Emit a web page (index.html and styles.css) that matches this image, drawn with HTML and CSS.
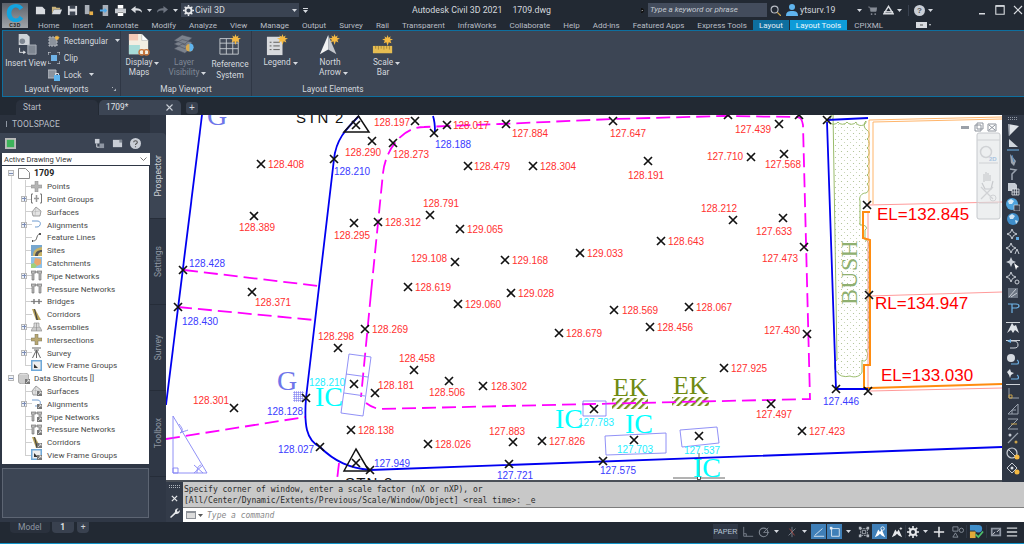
FILE: index.html
```html
<!DOCTYPE html>
<html lang="en">
<head>
<meta charset="utf-8">
<title>Autodesk Civil 3D 2021 - 1709.dwg</title>
<link rel="stylesheet" href="styles.css">
</head>
<body>
<svg class="sprite" width="0" height="0" aria-hidden="true">
  <defs>
    <symbol id="sun" viewBox="0 0 12 12"><path d="M6 0l1 3 2.500-1.500L8.500 4 12 5l-3 1.200 1.200 3L7.300 8 6 12 4.700 8 1.800 9.200 3 6.200 0 5l3.500-1-1-2.500L5 3z" fill="#f5b942"/></symbol>
    <symbol id="caret" viewBox="0 0 5 3"><path d="M0 0h5L2.500 3z" fill="#d5d9df"/></symbol>
    <symbol id="t-points" viewBox="0 0 11 11"><path d="M4 0h3v4h4v3H7v4H4V7H0V4h4z" fill="#b5b5b5" stroke="#888" stroke-width=".5"/></symbol>
    <symbol id="t-groups" viewBox="0 0 11 11"><path d="M2 1H.5v9H2M9 1h1.500v9H9" fill="none" stroke="#777"/><path d="M5.500 2v7M3 5.500h5" stroke="#999" stroke-width="1.500"/></symbol>
    <symbol id="t-surface" viewBox="0 0 11 11"><path d="M1 6l4-5 5 4-1 5H2z" fill="#e4e4e4" stroke="#888" stroke-width=".8"/><path d="M5 1l-1 9m-3-4l8-1" stroke="#aaa" stroke-width=".5"/></symbol>
    <symbol id="t-align" viewBox="0 0 11 11"><path d="M1 2h5c3 0 4 2 3 4-1 2-2 2-5 2" fill="none" stroke="#6e9bd0" stroke-width="1"/></symbol>
    <symbol id="t-feature" viewBox="0 0 11 11"><path d="M1 9c4 0 4-1 5-4s2-3 3-3" fill="none" stroke="#666"/><path d="M1 8h1v2H1zM8 1h2v2H8z" fill="#555"/></symbol>
    <symbol id="t-sites" viewBox="0 0 11 11"><path d="M0 0h11v11H0z" fill="#77a7cf"/><path d="M2 11c0-6 3-8 9-9v9z" fill="#c9b468"/><path d="M4 11c0-4 3-6 7-6v2c-3 0-4 2-4 4z" fill="#555"/></symbol>
    <symbol id="t-catch" viewBox="0 0 11 11"><path d="M0 0h11v11H0z" fill="#8fc1e8"/><path d="M4 1l6 1v5L6 9 3 6z" fill="#e8a76d"/><path d="M0 7l3-1 3 3-2 2H0z" fill="#9ecf7a"/></symbol>
    <symbol id="t-pipe" viewBox="0 0 11 11"><path d="M0 1h5v2H3v7H1V3H0zM6 1h5v2h-1v7H8V3H6z" fill="#bbb" stroke="#666" stroke-width=".6"/></symbol>
    <symbol id="t-bridge" viewBox="0 0 11 11"><path d="M0 5.500h11" stroke="#888" stroke-width="1.200"/><path d="M3 3v5M8 3v5" stroke="#777" stroke-width="1.400"/></symbol>
    <symbol id="t-corr" viewBox="0 0 11 11"><path d="M1 0l3 0 6 11H5z" fill="#b9a35a"/><path d="M3 0l1 0 3 11H5.500z" fill="#444"/></symbol>
    <symbol id="t-assy" viewBox="0 0 11 11"><path d="M0 10l2-4h7l2 4z" fill="#ccc" stroke="#888" stroke-width=".6"/><path d="M3 6V2h5v4M5.500 2v8" fill="#ddd" stroke="#888" stroke-width=".6"/></symbol>
    <symbol id="t-inter" viewBox="0 0 11 11"><path d="M4 0h3v4h4v3H7v4H4V7H0V4h4z" fill="#b9a873" stroke="#77705a" stroke-width=".5"/></symbol>
    <symbol id="t-survey" viewBox="0 0 11 11"><path d="M1 1h9M3 3h5M5.500 3L1.500 11M5.500 3l4 8M5.500 3v8" fill="none" stroke="#666"/></symbol>
    <symbol id="t-view" viewBox="0 0 11 11"><path d="M0 0h11v11H0z" fill="#6fa8d8"/><path d="M1.500 1.500h8v8h-8z" fill="#eee"/><path d="M3 8V4l4 4z" fill="#333"/></symbol>
    <symbol id="t-db" viewBox="0 0 11 11"><ellipse cx="5.500" cy="2" rx="5" ry="2" fill="#ddd" stroke="#888" stroke-width=".6"/><path d="M.5 2v7c0 1 2 2 5 2s5-1 5-2V2" fill="#ccc" stroke="#888" stroke-width=".6"/></symbol>
    <symbol id="link" viewBox="0 0 5 5"><path d="M0 0h5v5H0z" fill="#777"/><path d="M1 4l3-3M2 1h2v2" stroke="#fff" stroke-width=".6" fill="none"/></symbol>
    <symbol id="r-flag" viewBox="0 0 14 14"><path d="M2 1l11 2-7 7-3 3z" fill="#dfe3e8"/><path d="M3 1v12" stroke="#6e7683"/></symbol>
    <symbol id="r-flag2" viewBox="0 0 14 14"><path d="M3 1l9 8H3z" fill="#cfd5dc"/><path d="M1 12h12" stroke="#6fb3e8"/></symbol>
    <symbol id="r-blade" viewBox="0 0 14 14"><path d="M4 1l6 7-2 5-3-3z" fill="#9aa3af"/><path d="M6 2l2 7" stroke="#4f86b9"/></symbol>
    <symbol id="r-small" viewBox="0 0 14 14"><path d="M4 2l6 1-4 4v6" fill="none" stroke="#9aa3af" stroke-width="1.500"/></symbol>
    <symbol id="r-table" viewBox="0 0 14 14"><path d="M2 1h7l2 2v6H2z" fill="#c6ccd4"/><path d="M6 7h7v6H6zM8.300 7v6M10.600 7v6M6 10h7" fill="#39414f" stroke="#dfe3e8" stroke-width=".8"/></symbol>
    <symbol id="r-globe" viewBox="0 0 14 14"><circle cx="6" cy="7" r="6" fill="#4fa3dc"/><path d="M2 4l3-2 3 2-2 3H3zM8 8l3 1-2 3z" fill="#d9eaf6"/><path d="M8 8h6v6H8z" fill="#39414f" stroke="#dfe3e8" stroke-width=".6"/></symbol>
    <symbol id="r-globe2" viewBox="0 0 14 14"><circle cx="7" cy="7" r="6" fill="#3f8ecb"/><path d="M3 4l3-2 3 2-2 3H4zM9 8l3 1-2 3z" fill="#cfe4f3"/></symbol>
    <symbol id="r-snap" viewBox="0 0 14 14"><path d="M6 2l1.500 3.500L11 7 7.500 8.500 6 12 4.500 8.500 1 7l3.500-1.500z" fill="none" stroke="#c9ced6"/><path d="M10 10h3v3h-3z" fill="#5fa8e0"/></symbol>
    <symbol id="r-a" viewBox="0 0 14 14"><path d="M5 2l1.500 3.500L10 7 6.500 8.500 5 12 3.500 8.500 0 7l3.500-1.500z" fill="none" stroke="#c9ced6"/><path d="M9 13l2-5 2 5" stroke="#c9ced6" fill="none"/></symbol>
    <symbol id="r-cur" viewBox="0 0 14 14"><path d="M5 1l1.500 3.500L10 6 6.500 7.500 5 11 3.500 7.500 0 6l3.500-1.500z" fill="#c9ced6"/><path d="M8 7l5 4-2 .5L10 14z" fill="#fff"/></symbol>
    <symbol id="r-o" viewBox="0 0 14 14"><path d="M5 1l1.500 3.500L10 6 6.500 7.500 5 11 3.500 7.500 0 6l3.500-1.500z" fill="none" stroke="#c9ced6"/><circle cx="11" cy="11" r="2" fill="none" stroke="#c9ced6"/></symbol>
    <symbol id="r-plot" viewBox="0 0 14 14"><path d="M2 2h10v10H2z" fill="#6c7583"/><path d="M3 11l7-8M5 11l6-4" stroke="#c9ced6"/></symbol>
    <symbol id="r-t" viewBox="0 0 14 14"><path d="M2 3h8c2 0 3 1 3 2s-1 2-3 2H6M6 3v9" fill="none" stroke="#6fb3e8" stroke-width="1.200"/></symbol>
    <symbol id="r-ar" viewBox="0 0 14 14"><path d="M1 12l5-10 2 3 2-1 3 8-4-3-2 3-2-3z" fill="#dfe3e8"/></symbol>
    <symbol id="r-undo" viewBox="0 0 14 14"><path d="M2 3h6c3 0 4 2 4 4s-1 3-4 3H4" fill="none" stroke="#cfd5dc"/><path d="M5 1v4L1 3z" fill="#6fb3e8"/></symbol>
    <symbol id="r-ball" viewBox="0 0 14 14"><circle cx="5" cy="5" r="4" fill="#d5dae0"/><path d="M5 11h6c2 0 2-3 0-4" fill="none" stroke="#6fb3e8" stroke-width="1.200"/></symbol>
    <symbol id="r-spk" viewBox="0 0 14 14"><path d="M1 4l3-3 1 3 3 1-3 2-1 3-1-3z" fill="#dfe3e8"/><path d="M5 11h6c2 0 2-3 0-4" fill="none" stroke="#6fb3e8" stroke-width="1.200"/></symbol>
    <symbol id="r-ucs" viewBox="0 0 14 14"><path d="M3 1v10h10" fill="none" stroke="#9aa3af"/><path d="M3 8h3v3H3z" fill="none" stroke="#c9a24a"/></symbol>
    <symbol id="r-ucs2" viewBox="0 0 14 14"><path d="M2 12h10V2L2 12M6 12V8h4" fill="none" stroke="#9aa3af"/></symbol>
    <symbol id="r-ucs3" viewBox="0 0 14 14"><path d="M2 2h10L2 12h10" fill="none" stroke="#9aa3af"/><path d="M5 7h6" stroke="#c9a24a"/></symbol>
    <symbol id="r-ln" viewBox="0 0 14 14"><path d="M2 12L12 2" stroke="#9aa3af" stroke-width="1.200"/><circle cx="4" cy="4" r="1.500" fill="#c9ced6"/><circle cx="10" cy="11" r="1.500" fill="#c9a24a"/></symbol>
    <symbol id="r-cir" viewBox="0 0 14 14"><circle cx="6" cy="7" r="5" fill="none" stroke="#c9ced6" stroke-width="1.200"/><path d="M2 3l8 8" stroke="#c9ced6"/><circle cx="11" cy="11" r="2.500" fill="#f5b942"/></symbol>
    <symbol id="r-dia" viewBox="0 0 14 14"><path d="M6 2l5 5-5 5-5-5z" fill="none" stroke="#c9ced6"/><circle cx="11" cy="11" r="2.500" fill="#f5b942"/><circle cx="6" cy="7" r="1.500" fill="#dfe3e8"/></symbol>
  </defs>
</svg>

<div class="app">
  <header class="titlebar">
    <div class="appbtn">
      <svg class="applogo" viewBox="0 0 26 22"><path d="M22 5C20 2 17 1 14 1 8 1 4 5 4 11s4 10 10 10c3 0 6-1 8-4l-4-3c-1 2-2 3-4 3-3 0-5-3-5-6s2-6 5-6c2 0 3 1 4 3z" fill="#12a4e0"/></svg>
      <span class="applabel">C3D</span>
    </div>
    <div class="qat">
      <svg class="q" viewBox="0 0 12 12"><path d="M1 2h7l3 3v5H1z" fill="#d8dbe0"/></svg>
      <svg class="q" viewBox="0 0 12 12"><path d="M1 2h4l1 1h4v2H3l-2 5z" fill="#c9b27a"/><path d="M3 5h9l-2 5H1z" fill="#d8dbe0"/></svg>
      <svg class="q" viewBox="0 0 12 12"><path d="M1 1h10v10H1z" fill="#d8dbe0"/><path d="M3 1h6v3H3zM3 7h6v4H3z" fill="#3d4552"/></svg>
      <svg class="q" viewBox="0 0 12 12"><path d="M2 0h5v10H2z" fill="#aab0b9"/><path d="M7 7h4v4H7z" fill="#e8b04a"/></svg>
      <svg class="q" viewBox="0 0 12 12"><path d="M4 0h6v12H4z" fill="#aab0b9"/><path d="M1 5h5V3l3 3-3 3V7H1z" fill="#4fa8e8"/></svg>
      <svg class="q" viewBox="0 0 12 12"><path d="M3 0h6v4H3z" fill="#fff"/><path d="M0 4h12v5H0z" fill="#c5c9cf"/><path d="M3 7h6v5H3z" fill="#fff"/><path d="M3 8h6" stroke="#777"/></svg>
      <svg class="q" viewBox="0 0 12 12"><path d="M0 5l5-4v2.500c4 0 7 1 7 5-1-2-3-2.500-7-2.500V9z" fill="#d8dbe0"/></svg>
      <svg class="c" viewBox="0 0 5 3"><use href="#caret"/></svg>
      <svg class="q dim" viewBox="0 0 12 12"><path d="M12 5L7 1v2.500c-4 0-7 1-7 5 1-2 3-2.500 7-2.500V9z" fill="#6d7480"/></svg>
      <svg class="c" viewBox="0 0 5 3"><use href="#caret"/></svg>
    </div>
    <div class="workspace">
      <svg class="gear" viewBox="0 0 12 12"><circle cx="6" cy="6" r="3.300" fill="none" stroke="#e6e8eb" stroke-width="2"/><path d="M6 0v2M6 10v2M0 6h2M10 6h2M1.800 1.800l1.400 1.400M8.800 8.800l1.400 1.400M1.800 10.200l1.400-1.400M8.800 3.200l1.400-1.400" stroke="#e6e8eb" stroke-width="1.600"/></svg>
      <span>Civil 3D</span>
      <svg class="c push" viewBox="0 0 5 3"><use href="#caret"/></svg>
    </div>
    <svg class="c drop" viewBox="0 0 5 5"><path d="M0 0h5v1H0zM0 2h5L2.500 5z" fill="#d5d9df"/></svg>
    <div class="doc-title"><span>Autodesk Civil 3D 2021</span><span>1709.dwg</span></div>
    <svg class="tri" viewBox="0 0 3 5"><path d="M0 0l3 2.500L0 5z" fill="#d5d9df"/></svg>
    <div class="search">Type a keyword or phrase</div>
    <svg class="glass" viewBox="0 0 12 12"><circle cx="5" cy="5" r="3.800" fill="none" stroke="#b8bdc5" stroke-width="1.200"/><path d="M8 8l4 4" stroke="#c9a24a" stroke-width="1.400"/></svg>
    <svg class="user" viewBox="0 0 12 12"><circle cx="6" cy="3" r="3" fill="#5fb4ee"/><path d="M0 12c0-4 2-5 6-5s6 1 6 5z" fill="#5fb4ee"/></svg>
    <span class="username">ytsurv.19</span>
    <svg class="c ucaret" viewBox="0 0 5 3"><use href="#caret"/></svg>
    <svg class="cart" viewBox="0 0 10 10"><path d="M0 1h2l1 5h6l1-4H2.500" fill="#868c96" stroke="#868c96" stroke-width=".6"/><circle cx="4" cy="9" r="1" fill="#868c96"/><circle cx="8" cy="9" r="1" fill="#868c96"/></svg>
    <svg class="a360" viewBox="0 0 12 10"><path d="M6 1L1 9h10z" fill="none" stroke="#d8dbe0" stroke-width="1.600"/><path d="M1 7h10" stroke="#d8dbe0" stroke-width="1.600"/></svg>
    <svg class="c" viewBox="0 0 5 3"><use href="#caret"/></svg>
    <i class="tsep"></i>
    <span class="help">?</span>
    <svg class="c" viewBox="0 0 5 3"><use href="#caret"/></svg>
    <div class="winbtns">
      <svg class="wb" viewBox="0 0 10 10"><path d="M2 8h6v1.500H2z" fill="#d8dbe0"/></svg>
      <svg class="wb" viewBox="0 0 10 10"><path d="M.8.800h8.400v8.400H.8z" fill="none" stroke="#d8dbe0" stroke-width="1.100"/><path d="M.8 1h8.400" stroke="#d8dbe0" stroke-width="1.600"/></svg>
      <svg class="wb" viewBox="0 0 10 10"><path d="M1 1l8 8M9 1l-8 8" stroke="#d8dbe0" stroke-width="1.200"/></svg>
    </div>
  </header>

  <nav class="tabs">
    <span>Home</span><span>Insert</span><span>Annotate</span><span>Modify</span><span>Analyze</span><span>View</span><span>Manage</span><span>Output</span><span>Survey</span><span>Rail</span><span>Transparent</span><span>InfraWorks</span><span>Collaborate</span><span>Help</span><span>Add-ins</span><span>Featured Apps</span><span>Express Tools</span>
    <span class="tab-on">Layout</span><span class="tab-ctx">Layout Tools</span><span>CPIXML</span>
    <svg class="minbtn" viewBox="0 0 15 6"><path d="M0 0h11v6H0z" fill="#d8dbe0"/><path d="M4 2.500h3v1H4z" fill="#555"/><path d="M13 2h2l-1 2z" fill="#d8dbe0"/></svg>
  </nav>

  <section class="ribbon">
    <div class="panel p1">
      <div class="pbody">
        <div class="bigbtn w-insert">
          <svg class="ic" viewBox="0 0 24 24"><path d="M4 0h9l3 3v9H4z" fill="#cfd3d8"/><circle cx="8" cy="8" r="3" fill="#7f8792"/><path d="M5 15v5h5" fill="none" stroke="#e6e8eb"/><path d="M9 18l3 2-3 2z" fill="#e6e8eb"/><path d="M14 12h9v10h-9z" fill="#7f8792" stroke="#aeb4bc"/></svg>
          <span>Insert View</span>
        </div>
        <div class="vlist">
          <div class="smbtn"><svg class="sm" viewBox="0 0 12 12"><path d="M1 2h8v9H1z" fill="#8b929c" stroke="#b5bac1" stroke-dasharray="2 1"/><use href="#sun" x="6" y="0" width="6" height="6"/></svg><span>Rectangular</span><svg class="c cm" viewBox="0 0 5 3"><use href="#caret"/></svg></div>
          <div class="smbtn"><svg class="sm" viewBox="0 0 12 12"><path d="M0 3V0h3M9 0h3v3M12 9v3H9M3 12H0V9" fill="none" stroke="#dfe3e8"/><path d="M3 3h6v6H3z" fill="#6fb3e8"/></svg><span>Clip</span></div>
          <div class="smbtn"><svg class="sm" viewBox="0 0 12 12"><path d="M0 1h8v8H0z" fill="#8b929c" stroke="#b5bac1"/><path d="M6 6h6v6H6z" fill="#5fb4ee"/><path d="M7.500 6V4.500h3V6" fill="none" stroke="#dfe3e8"/></svg><span>Lock</span><svg class="c cm" viewBox="0 0 5 3"><use href="#caret"/></svg></div>
        </div>
      </div>
      <div class="plabel">Layout Viewports<svg class="launch" viewBox="0 0 4 4"><path d="M0 0h1v1H0zM4 4H1.500L4 1.500z" fill="#aeb4bc"/></svg></div>
    </div>
    <div class="panel p2">
      <div class="pbody">
        <div class="bigbtn w-maps">
          <svg class="ic" viewBox="0 0 24 24"><path d="M1 0h14l7 7v15H1z" fill="#f3eee2"/><path d="M1 0h10v7H1z" fill="#f3c9b5"/><path d="M1 12h12v10H1z" fill="#a8dcd8"/><path d="M15 0v7h7" fill="#fff" stroke="#999" stroke-width=".5"/><circle cx="15" cy="20" r="3" fill="none" stroke="#c8743a" stroke-width="1.500"/><circle cx="20" cy="20" r="3" fill="none" stroke="#c8743a" stroke-width="1.500"/></svg>
          <span>Display<svg class="c cl" viewBox="0 0 5 3"><use href="#caret"/></svg></span><span>Maps</span>
        </div>
        <div class="bigbtn w-layer dimtext">
          <svg class="ic" viewBox="0 0 24 24"><path d="M1 7l9-6 11 3-8 7zM1 11l9-5 11 3-8 7zM1 16l9-5 11 3-8 7z" fill="#7b828d" stroke="#454c59" stroke-width=".6"/><circle cx="18" cy="15" r="4" fill="#d9a94f"/><path d="M18 10a4 4 0 0 1 0 9z" fill="#5fb4ee"/></svg>
          <span>Layer</span><span>Visibility<svg class="c cl" viewBox="0 0 5 3"><use href="#caret"/></svg></span>
        </div>
        <div class="bigbtn w-ref">
          <svg class="ic" viewBox="0 0 24 24"><path d="M1 5h20v17H1zM1 10h20M1 16h20M8 5v17M15 5v17" fill="#434b59" stroke="#c5c9cf"/><use href="#sun" x="12" y="0" width="12" height="12"/></svg>
          <span>Reference</span><span>System</span>
        </div>
      </div>
      <div class="plabel">Map Viewport</div>
    </div>
    <div class="panel p3">
      <div class="pbody">
        <div class="bigbtn w-legend">
          <svg class="ic" viewBox="0 0 24 24"><path d="M1 3h17v20H1z" fill="#d8dadd"/><path d="M4 9h2M8 9h7M4 13h2M8 13h7M4 17h2M8 17h7" stroke="#555"/><use href="#sun" x="12" y="0" width="12" height="12"/></svg>
          <span>Legend<svg class="c cl" viewBox="0 0 5 3"><use href="#caret"/></svg></span>
        </div>
        <div class="bigbtn w-north">
          <svg class="ic" viewBox="0 0 24 24"><path d="M10 1L1 22l9-5z" fill="#f2f3f4"/><path d="M10 1l9 21-9-5z" fill="#c2c6cc"/><use href="#sun" x="11" y="0" width="12" height="12"/></svg>
          <span>North</span><span>Arrow<svg class="c cl" viewBox="0 0 5 3"><use href="#caret"/></svg></span>
        </div>
        <div class="bigbtn w-scale">
          <svg class="ic" viewBox="0 0 24 24"><path d="M1 13h21v8H1z" fill="#e6bd52"/><path d="M4 13v3M7 13v4M10 13v3M13 13v4M16 13v3M19 13v4" stroke="#8a6f2a" stroke-width=".7"/><use href="#sun" x="11" y="1" width="12" height="12"/></svg>
          <span>Scale<svg class="c cl" viewBox="0 0 5 3"><use href="#caret"/></svg></span><span>Bar</span>
        </div>
      </div>
      <div class="plabel">Layout Elements</div>
    </div>
  </section>

  <div class="doctabs">
    <div class="doctab">Start</div>
    <div class="doctab active"><span>1709*</span><svg class="dx" viewBox="0 0 7 7"><path d="M.5.500l6 6M6.500.500l-6 6" stroke="#c9ced6" stroke-width="1.100"/></svg></div>
    <div class="docplus">+</div>
  </div>

  <div class="workarea">
    <aside class="left">
      <div class="palette">
        <div class="phead"><i class="grip"></i>TOOLSPACE</div>
        <div class="ptools">
          <svg class="pt-first" viewBox="0 0 12 12"><path d="M0 0h12v12H0z" fill="#bbb"/><path d="M2 2h8v8H2z" fill="#3db35a"/></svg>
          <div class="pt-right">
            <svg viewBox="0 0 12 12"><path d="M1 1h5v5H1z" fill="#c9ced6"/><path d="M6 6h5v5H6z" fill="#8f97a3"/><path d="M3 6v4h3" fill="none" stroke="#dfe3e8"/></svg>
            <svg viewBox="0 0 12 12"><path d="M1 2h10v8H1z" fill="#c9ced6"/><path d="M8 2h3v3H8z" fill="#7f8792"/></svg>
            <svg viewBox="0 0 12 12"><circle cx="6" cy="6" r="6" fill="#c9ced6"/><path d="M4 4.500C4 2.500 8 2.500 8 4.500 8 6 6 6 6 7.500M6 9v1" fill="none" stroke="#555" stroke-width="1.200"/></svg>
          </div>
        </div>
        <div class="combo"><span>Active Drawing View</span><svg viewBox="0 0 7 4"><path d="M.5.500L3.500 3.500 6.500.500" fill="none" stroke="#777"/></svg></div>
        <div class="tree">
          <div class="row root g1"><i class="box minus"></i><svg class="tic wide" viewBox="0 0 12 11"><path d="M.5.500h7l4 4v6H.5z" fill="#fff" stroke="#888"/></svg><b>1709</b></div>
          <div class="row l1 g1"><i class="nobox"></i><svg class="tic"><use href="#t-points"/></svg><span>Points</span></div>
          <div class="row l1 g1"><i class="box plus"></i><svg class="tic"><use href="#t-groups"/></svg><span>Point Groups</span></div>
          <div class="row l1 g1"><i class="nobox"></i><svg class="tic"><use href="#t-surface"/></svg><span>Surfaces</span></div>
          <div class="row l1 g1"><i class="box plus"></i><svg class="tic"><use href="#t-align"/></svg><span>Alignments</span></div>
          <div class="row l1 g1"><i class="nobox"></i><svg class="tic"><use href="#t-feature"/></svg><span>Feature Lines</span></div>
          <div class="row l1 g1"><i class="nobox"></i><svg class="tic"><use href="#t-sites"/></svg><span>Sites</span></div>
          <div class="row l1 g1"><i class="nobox"></i><svg class="tic"><use href="#t-catch"/></svg><span>Catchments</span></div>
          <div class="row l1 g1"><i class="box plus"></i><svg class="tic"><use href="#t-pipe"/></svg><span>Pipe Networks</span></div>
          <div class="row l1 g1"><i class="nobox"></i><svg class="tic"><use href="#t-pipe"/></svg><span>Pressure Networks</span></div>
          <div class="row l1 g1"><i class="nobox"></i><svg class="tic"><use href="#t-bridge"/></svg><span>Bridges</span></div>
          <div class="row l1 g1"><i class="nobox"></i><svg class="tic"><use href="#t-corr"/></svg><span>Corridors</span></div>
          <div class="row l1 g1"><i class="box plus"></i><svg class="tic"><use href="#t-assy"/></svg><span>Assemblies</span></div>
          <div class="row l1 g1"><i class="nobox"></i><svg class="tic"><use href="#t-inter"/></svg><span>Intersections</span></div>
          <div class="row l1 g1"><i class="box plus"></i><svg class="tic"><use href="#t-survey"/></svg><span>Survey</span></div>
          <div class="row l1 g1 last"><i class="nobox"></i><svg class="tic"><use href="#t-view"/></svg><span>View Frame Groups</span></div>
          <div class="row root"><i class="box minus"></i><svg class="tic wide" viewBox="0 0 12 11"><use href="#t-db" width="11" height="11"/><use href="#link" x="7" y="6" width="5" height="5"/></svg><span>Data Shortcuts []</span></div>
          <div class="row l1"><i class="nobox"></i><svg class="tic" viewBox="0 0 11 11"><use href="#t-surface" width="11" height="11"/><use href="#link" x="6" y="6" width="5" height="5"/></svg><span>Surfaces</span></div>
          <div class="row l1"><i class="box plus"></i><svg class="tic" viewBox="0 0 11 11"><use href="#t-align" width="11" height="11"/><use href="#link" x="6" y="6" width="5" height="5"/></svg><span>Alignments</span></div>
          <div class="row l1"><i class="nobox"></i><svg class="tic" viewBox="0 0 11 11"><use href="#t-pipe" width="11" height="11"/><use href="#link" x="6" y="6" width="5" height="5"/></svg><span>Pipe Networks</span></div>
          <div class="row l1"><i class="nobox"></i><svg class="tic" viewBox="0 0 11 11"><use href="#t-pipe" width="11" height="11"/><use href="#link" x="6" y="6" width="5" height="5"/></svg><span>Pressure Networks</span></div>
          <div class="row l1"><i class="nobox"></i><svg class="tic" viewBox="0 0 11 11"><use href="#t-corr" width="11" height="11"/><use href="#link" x="6" y="6" width="5" height="5"/></svg><span>Corridors</span></div>
          <div class="row l1 last"><i class="nobox"></i><svg class="tic" viewBox="0 0 11 11"><use href="#t-view" width="11" height="11"/><use href="#link" x="6" y="6" width="5" height="5"/></svg><span>View Frame Groups</span></div>
        </div>
        <div class="detail"></div>
      </div>
      <div class="ptabs">
        <div class="ptab on"><span>Prospector</span></div>
        <div class="ptab"><span>Settings</span></div>
        <div class="ptab"><span>Survey</span></div>
        <div class="ptab"><span>Toolbox</span></div>
      </div>
    </aside>

    <div class="centre">
      <div class="drawing">
        <main class="canvas">
          <svg class="map" viewBox="166 115 836 365" width="836" height="365">
            <defs>
              <g id="x"><path d="M-4-4L4 4M4-4L-4 4"/></g>
              <pattern id="dots" width="6" height="6" patternUnits="userSpaceOnUse"><circle cx="1.500" cy="1.500" r=".6" fill="#a8bd8a"/><circle cx="4.500" cy="4.500" r=".6" fill="#c2d1ad"/></pattern>
              <pattern id="hatch" width="5" height="5" patternUnits="userSpaceOnUse" patternTransform="rotate(-45)"><rect width="5" height="5" fill="#fff"/><rect width="5" height="2.200" fill="#7a8f1e"/></pattern>
              <pattern id="grid" width="2" height="2" patternUnits="userSpaceOnUse"><rect width="2" height="2" fill="#fff"/><path d="M0 0h2M0 0v2" stroke="#6c6cf0" stroke-width="1"/></pattern>
            </defs>

            <path class="bush" d="M829 122a5 4 0 0 0 9 0a5 4 0 0 0 9 0a5 4 0 0 0 9 0a5 4 0 0 0 10-1a4 5 0 0 0 1 9a4 5 0 0 1 0 9a4 5 0 0 1 0 9a4 5 0 0 1 0 9a4 5 0 0 1 0 9a4 5 0 0 1 0 9a4 5 0 0 1 0 9a4 5 0 0 1-1 9a6 6 0 0 0-6 8v24a5 3 0 0 1 5 5v10a3 5 0 0 1 1 10a3 5 0 0 1 0 10a3 5 0 0 1 0 10a3 5 0 0 1 0 10a3 5 0 0 1 0 10a3 5 0 0 1 0 10a3 5 0 0 1 0 10a3 5 0 0 1 0 10a3 5 0 0 1 0 10a3 5 0 0 1 0 10a3 5 0 0 1 0 10a3 5 0 0 1-4 10v12a8 6 0 0 1-12 4a8 4 0 0 1-12-4a2 4 0 0 1-1-12l-4-248z"/>
            <text class="bushtext" transform="translate(857 305) rotate(-90)">BUSH</text>

            <path class="thinor" d="M869 205V120L1002 117M873 204V122L1002 119"/>
            <path class="thinred" d="M868 205L1002 202M868 212V390M870 296L1002 292M870 391L1002 388"/>
            <path class="orange" d="M870 212H863V238L870 240V365H864V388H870L1002 384"/>

            <rect x="612" y="398" width="36" height="11" fill="url(#hatch)"/>
            <rect x="672" y="397" width="37" height="9" fill="url(#hatch)"/>

            <path class="blue" d="M202 115L166 405"/>
            <path class="blue" d="M359 116C345 130 336 140 334 159L306 398C304 425 306 440 320 447C335 462 350 468 370 470L1002 447"/>
            <path class="blue" d="M433 116C435 122 435 127 435 132"/>
            <path class="blue" d="M827 120L868 118M827 122L836 389H868"/>

            <path class="pink" d="M371 293L361 397"/>
            <path class="pink" d="M371 293L383 173C386 147 404 127 424 127L500 124L613 119L723 116L797 117C801 117 802 120 803 125L810 399L506 406L379 409C374 408 370 406 366 403"/>
            <path class="pink" d="M184 270L319 286"/>
            <path class="pink" d="M178 307L314 320"/>
            <path class="pink" d="M166 439L305 417"/>
            <path class="pink" d="M339 463L337 480"/>

            <text class="blk" x="296" y="123">STN 2</text>
            <text class="blk" x="345" y="488">STN 3</text>
            <path class="tri" d="M358.500 116L344 132H369zM356 449L344 471H369z"/>

            <text class="g" x="207" y="125">G</text>
            <text class="g" x="277" y="390">G</text>
            <rect x="293" y="391" width="11" height="11" fill="url(#grid)"/>

            <path class="thin" d="M349 354L371 357L363 416L341 413zM346 374L368 377M344 393L365 396"/>
            <path class="thin" d="M583 401H606V416H583zM605 436L666 433V453L606 455zM680 430L717 427L719 443L682 447z"/>
            <path class="thin" d="M173 416L207 473H173zM173 468h5v5h-5zM179 424C182 428 184 430 180 433C184 431 186 431 188 430M197 473C197 468 198 466 201 465M194 465L203 473M203 465L194 473"/>
            <path class="gray" d="M673 478H725M699 453V478"/>
            <rect x="697.500" y="476.500" width="3" height="3" fill="#fff" stroke="#333" stroke-width=".8"/>

            <text class="ek" x="613" y="396">EK</text>
            <text class="ek" x="673" y="394">EK</text>

            <text class="ic" x="315" y="406">IC</text>
            <text class="ic" x="555" y="428">IC</text>
            <text class="ic" x="625" y="433">IC</text>
            <text class="ic" x="693" y="477">IC</text>

            <g class="xs">
              <use href="#x" x="356" y="125"/><use href="#x" x="415" y="121"/><use href="#x" x="447" y="125"/><use href="#x" x="434" y="133"/><use href="#x" x="372" y="141"/><use href="#x" x="393" y="143"/><use href="#x" x="334" y="159"/><use href="#x" x="261" y="164"/><use href="#x" x="468" y="166"/><use href="#x" x="254" y="216"/><use href="#x" x="354" y="223"/><use href="#x" x="378" y="222"/><use href="#x" x="430" y="215"/><use href="#x" x="460" y="229"/><use href="#x" x="183" y="270"/><use href="#x" x="455" y="262"/><use href="#x" x="408" y="287"/><use href="#x" x="252" y="292"/><use href="#x" x="178" y="307"/><use href="#x" x="365" y="329"/><use href="#x" x="458" y="304"/><use href="#x" x="338" y="348"/><use href="#x" x="414" y="370"/><use href="#x" x="449" y="381"/><use href="#x" x="483" y="386"/><use href="#x" x="354" y="384"/><use href="#x" x="375" y="393"/><use href="#x" x="306" y="398"/><use href="#x" x="234" y="408"/><use href="#x" x="351" y="430"/><use href="#x" x="428" y="444"/><use href="#x" x="320" y="447"/><use href="#x" x="356" y="463"/><use href="#x" x="370" y="470"/>
              <use href="#x" x="614" y="310"/><use href="#x" x="689" y="307"/><use href="#x" x="559" y="333"/><use href="#x" x="650" y="327"/><use href="#x" x="807" y="334"/><use href="#x" x="724" y="368"/><use href="#x" x="771" y="404"/><use href="#x" x="513" y="442"/><use href="#x" x="542" y="441"/><use href="#x" x="509" y="464"/><use href="#x" x="603" y="461"/><use href="#x" x="802" y="431"/><use href="#x" x="836" y="389"/><use href="#x" x="594" y="409"/><use href="#x" x="634" y="440"/><use href="#x" x="699" y="436"/>
              <use href="#x" x="506" y="124"/><use href="#x" x="613" y="121"/><use href="#x" x="728" y="115"/><use href="#x" x="779" y="124"/><use href="#x" x="533" y="166"/><use href="#x" x="648" y="161"/><use href="#x" x="751" y="157"/><use href="#x" x="784" y="154"/><use href="#x" x="733" y="220"/><use href="#x" x="783" y="218"/><use href="#x" x="661" y="241"/><use href="#x" x="580" y="253"/><use href="#x" x="505" y="260"/><use href="#x" x="511" y="293"/><use href="#x" x="804" y="247"/><use href="#x" x="799" y="115"/><use href="#x" x="827" y="120"/><use href="#x" x="867" y="205"/><use href="#x" x="869" y="295"/><use href="#x" x="868" y="391"/>
            </g>

            <g class="red">
              <text x="374" y="122">128.197</text><text x="453" y="125">128.017</text><text x="345" y="152">128.290</text><text x="393" y="154">128.273</text><text x="268" y="164">128.408</text><text x="474" y="166">128.479</text><text x="239" y="227">128.389</text><text x="334" y="235">128.295</text><text x="385" y="222">128.312</text><text x="423" y="203">128.791</text><text x="467" y="229">129.065</text><text x="411" y="258">129.108</text><text x="415" y="287">128.619</text><text x="255" y="302">128.371</text><text x="372" y="329">128.269</text><text x="465" y="304">129.060</text><text x="318" y="336">128.298</text><text x="399" y="358">128.458</text><text x="429" y="392">128.506</text><text x="491" y="386">128.302</text><text x="378" y="385">128.181</text><text x="193" y="400">128.301</text><text x="358" y="430">128.138</text><text x="435" y="444">128.026</text>
              <text x="622" y="310">128.569</text><text x="696" y="307">128.067</text><text x="566" y="333">128.679</text><text x="657" y="327">128.456</text><text x="764" y="330">127.430</text><text x="731" y="368">127.925</text><text x="756" y="414">127.497</text><text x="489" y="431">127.883</text><text x="549" y="441">127.826</text><text x="809" y="431">127.423</text>
              <text x="512" y="133">127.884</text><text x="610" y="133">127.647</text><text x="735" y="129">127.439</text><text x="540" y="166">128.304</text><text x="628" y="175">128.191</text><text x="707" y="156">127.710</text><text x="765" y="164">127.568</text><text x="701" y="208">128.212</text><text x="756" y="231">127.633</text><text x="668" y="241">128.643</text><text x="587" y="253">129.033</text><text x="512" y="260">129.168</text><text x="518" y="293">129.028</text><text x="762" y="258">127.473</text>
            </g>
            <g class="bl">
              <text x="435" y="144">128.188</text><text x="334" y="171">128.210</text><text x="189" y="263">128.428</text><text x="182" y="321">128.430</text><text x="267" y="411">128.128</text><text x="278" y="449">128.027</text><text x="374" y="463">127.949</text><text x="497" y="475">127.721</text><text x="600" y="470">127.575</text><text x="823" y="401">127.446</text>
            </g>
            <g class="cy">
              <text x="309" y="382">128.210</text><text x="578" y="422">127.783</text><text x="617" y="449">127.703</text><text x="684" y="450">127.537</text>
            </g>

            <text class="big" x="877" y="220">EL=132.845</text>
            <text class="big" x="875" y="309">RL=134.947</text>
            <text class="big" x="881" y="381">EL=133.030</text>

            <g class="vpc">
              <path d="M961 126h8v3h-8z" fill="#9aa0a8"/>
              <path d="M975 125h6v6h-6zM977 123h6v6h-6z" fill="none" stroke="#8d939c"/>
              <path d="M988 124h8v7h-8zM989 125l6 5M995 125l-6 5" fill="none" stroke="#8d939c"/>
            </g>
            <g class="nav">
              <rect x="977" y="133" width="23" height="86" rx="2" fill="#dfe1e4" fill-opacity=".55" stroke="#c5c8cc"/>
              <path d="M977 140h23M979 163h19M979 203h19" stroke="#cfd1d4"/>
              <circle cx="986" cy="152" r="5.500" fill="none" stroke="#d0d2d5" stroke-width="1.500"/>
              <text class="nav2d" x="989" y="161">2D</text>
              <path d="M984 182v-8m2 7v-9m2 9v-8m2 8v-6m-8 8l3 6h6l2-8" fill="none" stroke="#c8cacd" stroke-width="1.200"/>
              <path d="M981 187l12 12M993 187l-12 12" stroke="#d0d2d5" stroke-width="1.300"/>
              <circle cx="993" cy="198" r="3" fill="none" stroke="#d0d2d5"/>
            </g>
          </svg>
        </main>
        <div class="rtool">
          <i class="rgrip"></i>
          <svg><use href="#r-flag"/></svg><svg><use href="#r-flag2"/></svg><svg><use href="#r-blade"/></svg><svg><use href="#r-small"/></svg><svg><use href="#r-table"/></svg><svg><use href="#r-globe"/></svg><svg><use href="#r-globe2"/></svg><svg><use href="#r-snap"/></svg><svg><use href="#r-a"/></svg><svg><use href="#r-cur"/></svg><svg><use href="#r-o"/></svg><svg><use href="#r-plot"/></svg><svg><use href="#r-t"/></svg>
          <i class="rsep r1"></i>
          <svg><use href="#r-ar"/></svg>
          <i class="rsep r2"></i>
          <svg><use href="#r-undo"/></svg><svg><use href="#r-ball"/></svg><svg><use href="#r-spk"/></svg>
          <i class="rsep r3"></i>
          <svg><use href="#r-ucs"/></svg><svg><use href="#r-ucs2"/></svg><svg><use href="#r-ucs3"/></svg><svg><use href="#r-ln"/></svg><svg><use href="#r-cir"/></svg><svg><use href="#r-dia"/></svg>
        </div>
      </div>
      <div class="command">
        <div class="cmd-handle">
          <i class="dots"></i>
          <svg viewBox="0 0 8 8"><path d="M1 1l6 6M7 1l-6 6" stroke="#e6e8eb" stroke-width="1.500"/></svg>
          <svg class="wrench" viewBox="0 0 10 10"><path d="M0 9l5-5c-.5-2 1-4 3.500-3.500L7 2v1.500h1.500L10 2c0 3-2 4.500-4.500 4L1 10z" fill="#e6e8eb"/></svg>
        </div>
        <div class="cmd-main">
          <div class="cmd-hist">Specify corner of window, enter a scale factor (nX or nXP), or<br>[All/Center/Dynamic/Extents/Previous/Scale/Window/Object] &lt;real time&gt;: _e</div>
          <div class="cmd-in">
            <svg viewBox="0 0 10 8"><path d="M0 0h10v8H0z" fill="#8f939a"/><path d="M1 2h8v5H1z" fill="#dcdcdc"/></svg>
            <svg class="c cin" viewBox="0 0 5 3"><path d="M0 0h5L2.500 3z" fill="#555"/></svg>
            <span>Type a command</span>
          </div>
        </div>
      </div>
    </div>
  </div>

  <footer class="status">
    <div class="ltabs">
      <span class="ltab">Model</span><span class="ltab on">1</span><span class="ltab plusl">+</span>
    </div>
    <div class="sbar">
      <span class="paper">PAPER</span>
      <svg class="si" viewBox="0 0 14 14"><path d="M2 1v11h11M2 9h3v3" fill="none" stroke="#7f8792"/></svg>
      <svg class="si" viewBox="0 0 14 14"><circle cx="6.500" cy="7.500" r="5" fill="none" stroke="#7f8792" stroke-width="1.300"/><path d="M6.500 7.500H13M6.500 7.500L12 2" stroke="#7f8792"/></svg>
      <svg class="c" viewBox="0 0 5 3"><use href="#caret"/></svg>
      <svg class="si ml3" viewBox="0 0 14 14"><path d="M7 1v12M3 11L11 3" stroke="#7f8792"/><path d="M4 3l6 8" stroke="#a8453f"/></svg>
      <svg class="c" viewBox="0 0 5 3"><use href="#caret"/></svg>
      <span class="act"><svg class="si" viewBox="0 0 14 14"><path d="M1 12h12M2 11L11 3" stroke="#e6eef5" fill="none"/></svg></span>
      <span class="act tight"><svg class="si" viewBox="0 0 14 14"><path d="M3 3h9v9H3z" fill="none" stroke="#e6eef5"/><path d="M1 1h3v3H1z" fill="#e6eef5"/></svg></span>
      <svg class="c ml-1" viewBox="0 0 5 3"><use href="#caret"/></svg>
      <svg class="si ml3" viewBox="0 0 14 14"><path d="M3 3h8v8H3z" fill="none" stroke="#aeb4bc" stroke-dasharray="2 1"/><path d="M5 5h4v4H5z" fill="none" stroke="#aeb4bc"/><path d="M1 1h3v3H1zM10 1h3v3h-3zM1 10h3v3H1zM10 10h3v3h-3z" fill="#aeb4bc"/></svg>
      <span class="act tight2"><svg class="si" viewBox="0 0 14 14"><path d="M1 13l4-9 2 3 2-3 4 9-4-2-2-2-2 2z" fill="#fff"/><circle cx="10" cy="3" r="2" fill="none" stroke="#fff"/></svg></span>
      <svg class="si" viewBox="0 0 14 14"><path d="M1 13l4-9 2 3 2-3 4 9-4-2-2-2-2 2z" fill="#e6e8eb"/><path d="M10 3h3M11.500 1.500v3" stroke="#e6e8eb"/></svg>
      <i class="ssep"></i>
      <svg class="si" viewBox="0 0 12 12"><circle cx="6" cy="6" r="3" fill="none" stroke="#e6e8eb" stroke-width="2"/><path d="M6 0v2.500M6 9.500V12M0 6h2.500M9.500 6H12M1.800 1.800l1.800 1.800M8.400 8.400l1.800 1.800M1.800 10.200l1.800-1.800M8.400 3.600l1.800-1.800" stroke="#e6e8eb" stroke-width="1.600"/></svg>
      <svg class="c" viewBox="0 0 5 3"><use href="#caret"/></svg>
      <svg class="si ml1" viewBox="0 0 14 14"><path d="M7 1v12M1 7h12" stroke="#e6e8eb" stroke-width="1.800"/></svg>
      <svg class="si ml3" viewBox="0 0 14 14"><path d="M1 1h6v5H1z" fill="none" stroke="#8f97a3"/><circle cx="11" cy="5" r="2.500" fill="none" stroke="#8f97a3"/><path d="M4 8l3 5H1z" fill="none" stroke="#8f97a3"/></svg>
      <i class="ssep"></i>
      <svg class="si big-si ml1" viewBox="0 0 16 16"><path d="M1 1h8v6H1z" fill="#3f8ecb"/><circle cx="10" cy="5" r="4" fill="#3f8ecb"/><path d="M1 8h6v7H1z" fill="#e0a93a"/><path d="M7 11l3 3 5-6" fill="none" stroke="#4fc06b" stroke-width="1.800"/></svg>
      <i class="ssep"></i>
      <svg class="si ml2" viewBox="0 0 14 14"><path d="M1 2h12v10H1z" fill="#8f97a3"/><path d="M3 4h8v6H3z" fill="#2c3442"/><path d="M3 10l3-3M8 7l3-3" stroke="#e6e8eb"/></svg>
      <svg class="si" viewBox="0 0 14 14"><path d="M1 2.500h12M1 7h12M1 11.500h12" stroke="#cfd3d8" stroke-width="1.700"/></svg>
    </div>
  </footer>
</div>
</body>
</html>
```

FILE: styles.css
```css
* { box-sizing: border-box; }
html, body { margin: 0; padding: 0; }
body { width: 1024px; height: 544px; overflow: hidden; background: #222933; font-family: Roboto, "Open Sans", sans-serif; color: #d5d9df; }
.sprite { display: block; height: 0; }
.app { display: flex; flex-direction: column; width: 1024px; height: 544px; border-bottom: 1px solid #1194c8; }
svg { display: block; flex: none; }
.c { width: 5px; height: 3px; }

/* Title bar */
.titlebar { display: flex; align-items: center; height: 20px; padding-left: 2px; font-size: 8.500px; position: relative; }
.appbtn { align-self: flex-start; width: 26px; height: 25px; margin-top: 3px; background: linear-gradient(#5b6069, #a0a5aa); display: flex; flex-direction: column; align-items: center; position: relative; z-index: 2; }
.applogo { width: 24px; height: 20px; }
.applabel { font: bold 5px "Liberation Sans", sans-serif; color: #222; line-height: 5px; letter-spacing: .5px; }
.qat { display: flex; align-items: center; gap: 5px; margin-left: 7px; }
.q { width: 11px; height: 11px; }
.workspace { display: flex; align-items: center; width: 118px; height: 14px; margin-left: 3px; padding: 0 2px; background: #3a4352; font-size: 9px; color: #d5d9df; gap: 1px; }
.gear { width: 11px; height: 11px; }
.push { margin-left: auto; }
.drop { margin-left: 4px; height: 5px; }
.doc-title { display: flex; gap: 10px; width: 222px; margin-left: 104px; font-size: 8.800px; color: #d5d9df; white-space: nowrap; }
.tri { width: 3px; height: 5px; margin-left: 7px; }
.search { width: 119px; height: 14px; margin-left: 4px; background: #434c5c; font-size: 8px; font-style: italic; line-height: 14px; padding-left: 2px; color: #c4c9d0; }
.glass { width: 11px; height: 11px; margin-left: 3px; }
.user { width: 12px; height: 12px; margin-left: 5px; }
.username { margin-left: 2px; width: 55px; font-size: 8.800px; }
.ucaret { margin-left: 2px; }
.cart { width: 9px; height: 9px; margin-left: 6px; }
.a360 { width: 11px; height: 10px; margin-left: 6px; margin-right: 3px; }
.tsep { width: 1px; height: 11px; background: #39414f; margin-left: 6px; }
.help { width: 11px; height: 11px; margin-left: 5px; margin-right: 3px; border-radius: 50%; background: #c9ced6; color: #555; font: bold 8px/11px "Liberation Sans", sans-serif; text-align: center; }
.winbtns { display: flex; gap: 8px; margin-left: 44px; }
.wb { width: 10px; height: 10px; }

/* Ribbon tabs */
.tabs { display: flex; align-items: center; height: 10px; padding-left: 38px; gap: 13px; font-size: 8px; color: #b9bec6; white-space: nowrap; }
.tabs .tab-on { background: #0e6f9f; color: #e6eef5; height: 11px; line-height: 11px; padding: 0 6px; margin-left: -7px; margin-right: -12px; }
.tabs .tab-ctx { background: #0e9bd8; color: #f0f8fc; height: 11px; line-height: 11px; padding: 0 6px; margin-right: -6px; }
.minbtn { width: 15px; height: 6px; margin-left: 20px; }

/* Ribbon */
.ribbon { display: flex; height: 67px; margin-left: 2px; background: #3c4554; border: 1px solid #0e6f9f; border-right: none; }
.panel { display: flex; flex-direction: column; border-right: 1px solid #2f3745; }
.p1 { width: 118px; }
.p2 { width: 131px; }
.p3 { width: 162px; border-right: none; }
.pbody { flex: 1; display: flex; min-height: 0; }
.plabel { height: 14px; font-size: 8.300px; padding-top: 2px; line-height: 11px; text-align: center; color: #d5d9df; position: relative; }
.p1 .plabel { padding-right: 10px; }
.launch { position: absolute; right: 4px; top: 5px; width: 4px; height: 4px; }
.bigbtn { display: flex; flex-direction: column; align-items: center; font-size: 8.300px; line-height: 10px; white-space: nowrap; padding-top: 3px; color: #d5d9df; }
.bigbtn span { display: flex; align-items: center; position: relative; }
.bigbtn .ic { width: 22px; height: 22px; margin-bottom: 1px; }
.cl { position: absolute; left: 100%; margin-left: 2px; top: 5px; }
.dimtext { color: #7f8794; }
.w-insert { width: 46px; margin-left: 1px; }
.w-insert .ic { margin-bottom: 2px; }
.w-maps { width: 36px; }
.w-layer { width: 54px; }
.w-ref { width: 38px; line-height: 11px; }
.w-ref span:first-of-type { margin-top: 2px; }
.w-legend { width: 44px; margin-left: 3px; }
.w-north { width: 62px; }
.w-scale { width: 44px; }
.vlist { display: flex; flex-direction: column; gap: 4px; padding-top: 3px; }
.smbtn { display: flex; align-items: center; gap: 4px; height: 13px; font-size: 8.300px; }
.sm { width: 12px; height: 12px; }
.cm { margin-left: 3px; }

/* Document tabs */
.doctabs { display: flex; align-items: flex-end; height: 18px; padding-left: 16px; font-size: 8.300px; color: #b9bec6; }
.doctab { width: 82px; height: 15px; background: #2a313d; border-radius: 5px 5px 0 0; padding-left: 7px; line-height: 15px; }
.doctab.active { background: #3c4554; display: flex; align-items: center; justify-content: space-between; padding: 0 8px 0 7px; margin-left: 1px; color: #e0e3e7; }
.dx { width: 7px; height: 7px; }
.docplus { width: 12px; height: 12px; margin-left: 5px; margin-bottom: 1px; background: #39414f; border-radius: 3px; color: #d5d9df; font: 10px/12px "Liberation Sans", sans-serif; text-align: center; }

/* Work area */
.workarea { display: flex; height: 407px; }
.left { display: flex; width: 166px; background: #2f3745; }
.palette { width: 150px; display: flex; flex-direction: column; }
.phead { height: 18px; background: #2a313d; font-size: 8.500px; color: #b9bec6; display: flex; align-items: center; gap: 5px; padding-left: 6px; letter-spacing: .1px; }
.grip { width: 1px; height: 6px; background: #8f97a3; }
.ptools { height: 20px; background: #3b4453; display: flex; align-items: center; justify-content: space-between; padding: 0 9px 0 5px; }
.pt-first { width: 11px; height: 11px; }
.pt-right { display: flex; gap: 7px; }
.pt-right svg { width: 11px; height: 11px; }
.combo { height: 12px; margin-left: 2px; background: #fff; display: flex; align-items: center; justify-content: space-between; padding: 0 3px 0 2px; font-size: 7.500px; color: #333; }
.combo svg { width: 7px; height: 4px; }
.tree { height: 298px; margin: 1px 1px 0 2px; background: #fff; color: #4a4a4a; font-size: 8.100px; padding-top: 1px; }
.row { display: flex; align-items: center; height: 12.800px; white-space: nowrap; }
.row.root { padding-left: 6px; }
.row.l1 { padding-left: 19px; background: linear-gradient(#cfcfcf, #cfcfcf) 23px 0 / 1px 100% no-repeat, linear-gradient(#cfcfcf, #cfcfcf) 23px 6px / 7px 1px no-repeat; }
.row.g1 { background-image: linear-gradient(#dcdcdc, #dcdcdc), linear-gradient(#cfcfcf, #cfcfcf), linear-gradient(#cfcfcf, #cfcfcf); background-position: 9px 0, 23px 0, 23px 6px; background-size: 1px 100%, 1px 100%, 7px 1px; background-repeat: no-repeat; }
.row.root.g1 { background-image: linear-gradient(#dcdcdc, #dcdcdc); background-position: 9px 8px; background-size: 1px 100%; background-repeat: no-repeat; }
.row.l1.last { background-size: 1px 100%, 1px 7px, 7px 1px; }
.row.l1.last:not(.g1) { background-size: 1px 7px, 7px 1px; }
.box, .nobox { width: 6px; height: 6px; flex: none; }
.box { border: 1px solid #b8b8b8; background: #eef2f8 linear-gradient(#7c8db5, #7c8db5) center / 4px 1px no-repeat; position: relative; }
.plus { background-image: linear-gradient(#7c8db5, #7c8db5), linear-gradient(#7c8db5, #7c8db5); background-position: center; background-size: 4px 1px, 1px 4px; background-repeat: no-repeat; }
.tic { width: 11px; height: 11px; margin-left: 4px; margin-right: 5px; }
.tic.wide { width: 12px; margin-right: 4px; }
.row b { font-size: 8.800px; color: #222; font-weight: 700; }
.detail { height: 50px; margin: 4px 1px 0 2px; background: #3c4554; border: 1px solid #5d6573; }
.ptabs { width: 16px; padding-top: 18px; display: flex; flex-direction: column; }
.ptab { height: 86px; background: #2f3745; border-bottom: 1px solid #262d39; display: flex; align-items: center; justify-content: center; color: #8f97a3; font-size: 8.500px; }
.ptab.on { background: #3c4554; color: #cfd3d8; border-radius: 0 4px 0 0; }
.ptab span { writing-mode: vertical-rl; transform: rotate(180deg); }

.centre { width: 858px; display: flex; flex-direction: column; }
.drawing { display: flex; height: 367px; background: #4a4f57; }
.canvas { width: 836px; height: 365px; background: #fff; overflow: hidden; }
.map { display: block; font-family: "Liberation Sans", sans-serif; }
.xs { fill: none; stroke: #111; stroke-width: 1.700; }
.red text, .bl text, .cy text { font-size: 10px; dominant-baseline: central; }
.red { fill: #ff3030; }
.bl { fill: #3a3aff; }
.cy { fill: #1feeff; }
.blue { fill: none; stroke: #0000f0; stroke-width: 1.800; }
.pink { fill: none; stroke: #ff00ff; stroke-width: 1.800; stroke-dasharray: 14 6; }
.tri { fill: none; stroke: #111; stroke-width: 1.500; }
.blk { font-size: 15px; letter-spacing: 1.200px; fill: #111; }
.g { font: 28px "Liberation Serif", serif; fill: #6f76ea; }
.ic { font: 28px "Liberation Serif", serif; fill: #00ffff; }
.ek { font: 26px "Liberation Serif", serif; fill: #6f8a12; }
.thin { fill: none; stroke: #8585f5; stroke-width: .9; }
.gray { fill: none; stroke: #555; stroke-width: .9; }
.bush { fill: url(#dots); stroke: #8fb45a; stroke-width: .9; }
.bushtext { font: 24px "Liberation Serif", serif; fill: #8fb070; letter-spacing: .3px; }
.thinor { fill: none; stroke: #ffb56b; stroke-width: 1; }
.thinred { fill: none; stroke: #ff9a9a; stroke-width: 1; }
.orange { fill: none; stroke: #ff8c10; stroke-width: 2; }
.big { font-size: 17px; fill: #ff0000; }
.nav2d { font-size: 6px; font-weight: bold; fill: #a9c4e0; }

.rtool { width: 22px; height: 367px; background: #2f3745; display: flex; flex-direction: column; align-items: center; padding-top: 1px; }
.rtool svg { width: 14px; height: 14px; margin-bottom: .800px; }
.rgrip { width: 10px; height: 5px; margin-bottom: 2px; background: repeating-linear-gradient(90deg, #8f97a3 0 1px, transparent 1px 2px) 0 1px / 100% 1px no-repeat, repeating-linear-gradient(90deg, #8f97a3 0 1px, transparent 1px 2px) 0 3px / 100% 1px no-repeat; flex: none; }
.rsep { width: 14px; height: 1px; background: #cfd3d8; flex: none; }
.r1 { margin: 7px 0 -2px; }
.r2 { margin: 4px 0 -3px; }
.r3 { margin: 1.400px 0 2px; }

/* Command line */
.command { display: flex; height: 40px; }
.cmd-handle { width: 17px; background: #333b49; display: flex; flex-direction: column; align-items: center; padding-top: 3px; gap: 6px; }
.dots { width: 11px; height: 4px; background: repeating-linear-gradient(90deg, #aeb4bc 0 1px, transparent 1px 2px) 0 0 / 100% 1px no-repeat, repeating-linear-gradient(90deg, #aeb4bc 0 1px, transparent 1px 2px) 0 2px / 100% 1px no-repeat; }
.cmd-handle svg { width: 7px; height: 7px; }
.cmd-handle .wrench { width: 10px; height: 10px; }
.cmd-main { flex: 1; display: flex; flex-direction: column; }
.cmd-hist { height: 26px; background: #c8c8c8; border-bottom: 1px solid #7d7d7d; font: 8px/10.500px "DejaVu Sans Mono", monospace; color: #2b2b2b; padding: 3px 0 0 1px; white-space: nowrap; }
.cmd-in { height: 14px; background: #fff; display: flex; align-items: center; font: italic 8px "DejaVu Sans Mono", monospace; color: #8a8a8a; padding-left: 3px; }
.cmd-in svg:first-child { width: 10px; height: 8px; }
.cin { margin: 0 4px 0 2px; }

/* Status bar */
.status { flex: 1; display: flex; align-items: flex-start; justify-content: space-between; padding-right: 6px; }
.ltabs { display: flex; gap: 2px; margin-left: 10px; font-size: 8.500px; }
.ltab { height: 11px; line-height: 11px; padding: 0 8px; background: #2a313d; color: #8f97a3; border-radius: 0 0 4px 4px; }
.ltab.on { background: #39414f; color: #e6e8eb; font-weight: 600; width: 22px; text-align: center; padding: 0; }
.plusl { padding: 0 4px; background: #39414f; color: #cfd3d8; margin-left: 1px; }
.sbar { display: flex; align-items: center; gap: 4px; height: 17px; margin-top: 1px; }
.paper { background: #2f3745; font: 7.200px/15px "Liberation Sans", sans-serif; text-align: center; color: #b9c6d6; width: 25px; height: 15px; }
.si { width: 12px; height: 12px; }
.big-si { width: 15px; height: 15px; }
.ml1 { margin-left: 1px; }
.ml2 { margin-left: 2px; }
.ml3 { margin-left: 3px; }
.act { width: 15px; height: 15px; background: #3f7fb8; display: flex; align-items: center; justify-content: center; }
.tight { margin-left: -3px; }
.tight2 { margin-left: -2px; }
.ml-1 { margin-left: 0; }
.ssep { width: 1px; height: 13px; background: #2f3745; margin: 0 -2.500px; }
```
